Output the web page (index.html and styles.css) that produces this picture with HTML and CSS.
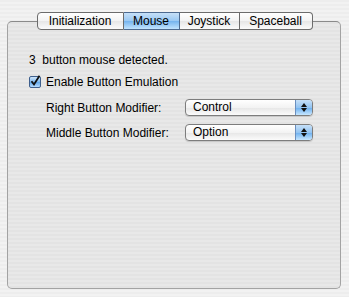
FILE: index.html
```html
<!DOCTYPE html>
<html lang="en">
<head>
    <meta charset="UTF-8">
    <title>Mouse</title>
    <link rel="stylesheet" href="styles.css">
</head>
<body>
    <div class="prefs">
        <ul class="tabs">
            <li class="t-init">Initialization</li>
            <li class="t-mouse on">Mouse</li>
            <li class="t-joy">Joystick</li>
            <li class="t-space">Spaceball</li>
        </ul>

        <section class="panel">
            <p class="detected">3&nbsp; button mouse detected.</p>

            <label class="check">
                <span class="box">
                    <svg width="12" height="12" viewBox="0 0 12 12">
                        <path d="M2.5 6.2 L5 9.5 L10.5 0.8" fill="none" stroke="#111" stroke-width="1.8"/>
                    </svg>
                </span>
                Enable Button Emulation
            </label>

            <div class="rows">
                <span class="name">Right Button Modifier:</span>
                <div class="popup"><span>Control</span><i class="arrows"></i></div>
                <span class="name">Middle Button Modifier:</span>
                <div class="popup"><span>Option</span><i class="arrows"></i></div>
            </div>
        </section>
    </div>
</body>
</html>
```

FILE: styles.css
```css
html, body { margin: 0; height: 100%; }
body {
    font-family: "Liberation Sans", Arial, sans-serif;
    font-size: 12px;
    color: #000;
    background: repeating-linear-gradient(#ededed 0 2px, #f2f2f2 2px 4px);
}
.prefs { padding: 12px 8px 0 7px; }

.tabs { display: flex; justify-content: center; margin: 0 0 -9px 1px; padding: 0; list-style: none; position: relative; z-index: 1; }
.tabs li {
    box-sizing: border-box; height: 18px; line-height: 16px; text-align: center;
    border: 1px solid #6c6c6c; border-left: none;
    background: linear-gradient(#ffffff, #f3f3f3 50%, #e6e6e6 51%, #fbfbfb);
}
.tabs li:first-child { border-left: 1px solid #6c6c6c; border-radius: 4px 0 0 4px; }
.tabs li:last-child { border-radius: 0 4px 4px 0; }
.tabs li.on { background: linear-gradient(#c6e0f8, #99c8f3 50%, #74b3ee 51%, #c2e4ff); border-color: #4d6a90; }
.tabs .t-init { width: 87px; }
.tabs .t-mouse { width: 56px; }
.tabs .t-joy { width: 60px; }
.tabs .t-space { width: 73px; }

.panel {
    height: 235px; padding: 31px 0 0 21px;
    border: 1px solid #a3a3a3; border-top-color: #8a8a8a; border-radius: 5px;
    background: repeating-linear-gradient(#e3e3e3 0 2px, #e8e8e8 2px 4px);
}
.detected { margin: 0 0 8px; line-height: 14px; }

.check { display: flex; align-items: center; gap: 5px; height: 14px; }
.check .box {
    width: 10px; height: 10px; border: 1px solid #3d5e8c; border-radius: 2px;
    background: linear-gradient(#cfe6fb, #7fb8ee 50%, #5ea4e8 51%, #b5dbff);
    position: relative;
}
.check svg { position: absolute; left: -1px; top: -2px; }

.rows { display: grid; grid-template-columns: 139px 128px; row-gap: 8px; align-items: center; margin: 10px 0 0 17px; white-space: nowrap; }
.popup {
    display: flex; height: 15px; border: 1px solid #7d7d7d; border-radius: 4px; overflow: hidden;
    background: linear-gradient(#ffffff, #f3f3f3 50%, #e6e6e6 51%, #fbfbfb);
    box-shadow: 0 1px 1px rgba(0,0,0,0.15);
}
.popup span { flex: 1; padding-left: 7px; line-height: 15px; }
.popup .arrows {
    width: 16px; border-left: 1px solid #6a8fbf; position: relative;
    background: linear-gradient(#c6e0f8, #93c4f2 50%, #6aaeee 51%, #c6e6ff);
}
.popup .arrows::before, .popup .arrows::after {
    content: ""; position: absolute; left: 5px; border-left: 3px solid transparent; border-right: 3px solid transparent;
}
.popup .arrows::before { top: 3px; border-bottom: 4px solid #111; }
.popup .arrows::after { bottom: 3px; border-top: 4px solid #111; }
```
